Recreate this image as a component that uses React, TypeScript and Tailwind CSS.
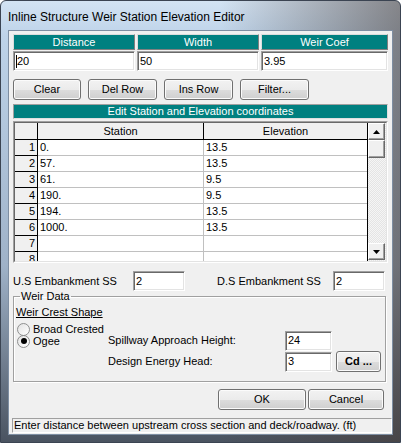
import React from "react";

const rows: [string, string][] = [
  ["0.", "13.5"],
  ["57.", "13.5"],
  ["61.", "9.5"],
  ["190.", "9.5"],
  ["194.", "13.5"],
  ["1000.", "13.5"],
  ["", ""],
  ["", ""],
];

const sunken =
  "border border-t-[#a0a0a0] border-l-[#a0a0a0] border-b-white border-r-white shadow-[inset_1px_1px_0_#696969,inset_-1px_-1px_0_#e3e3e3] bg-white";

const btn =
  "flex items-center justify-center rounded-[3px] border border-[#707070] bg-[linear-gradient(to_bottom,#f2f2f2,#ebebeb_50%,#dddddd_51%,#cfcfcf)] shadow-[inset_0_0_0_1px_#fbfbfb] text-[11px] text-black";

function Field({ value, className, caret }: { value: string; className: string; caret?: boolean }) {
  return (
    <div className={`${sunken} ${className} flex items-center pl-[2px] text-[11px]`}>
      {caret && <span className="w-px h-[13px] bg-black" />}
      <span>{value}</span>
    </div>
  );
}

function Radio({ checked, label }: { checked?: boolean; label: string }) {
  return (
    <div className="flex items-center h-[12px]">
      <span className="w-[13px] h-[13px] rounded-full border border-[#8e8f8f] bg-[linear-gradient(135deg,#e2e2e2,#ffffff)] flex items-center justify-center">
        {checked && <span className="w-[6px] h-[6px] rounded-full bg-black" />}
      </span>
      <span className="ml-[3px]">{label}</span>
    </div>
  );
}

function ScrollBtn({ up }: { up?: boolean }) {
  return (
    <div className="h-[17px] w-[17px] bg-[#f0f0f0] border border-t-white border-l-white border-b-[#696969] border-r-[#696969] shadow-[inset_-1px_-1px_0_#a0a0a0] flex items-center justify-center">
      <svg width="7" height="4" viewBox="0 0 7 4">
        {up ? <path d="M3.5 0L7 4H0z" fill="#000" /> : <path d="M0 0H7L3.5 4z" fill="#000" />}
      </svg>
    </div>
  );
}

export default function App() {
  return (
    <div className="w-[401px] h-[443px] bg-white font-['Liberation_Sans',Arial,sans-serif] text-black">
      <div className="w-full h-full flex flex-col rounded-t-[6px] border border-[#3b4452] bg-[linear-gradient(to_right,transparent_55%,rgba(70,58,52,0.55)),linear-gradient(to_bottom,#d3e3f3,#bed3e9_8%,#9fb2c8_60%,#4a5360)]">
        {/* title */}
        <div className="h-[29px] flex items-center pl-[7px] pt-[2px] text-[12px] text-black">
          Inline Structure Weir Station Elevation Editor
        </div>
        {/* client */}
        <div className="mx-[7px] h-[405px] bg-[#f0f0f0] border border-[#7e8ea2] flex flex-col pl-[4px] pt-[3px] text-[11px]">
          {/* top table */}
          <div className="grid grid-cols-[122px_122px_127px] gap-x-[2px] gap-y-[1px] w-[375px]">
            {["Distance", "Width", "Weir Coef"].map((h) => (
              <div
                key={h}
                className="h-[16px] bg-[#008080] text-white text-[11px] flex items-center justify-center border border-t-[#dcdcdc] border-l-[#dcdcdc] border-b-[#808080] border-r-[#808080]"
              >
                {h}
              </div>
            ))}
            <Field value="20" className="h-[20px]" caret />
            <Field value="50" className="h-[20px]" />
            <Field value="3.95" className="h-[20px]" />
          </div>

          {/* buttons */}
          <div className="flex gap-[7px] mt-[8px]">
            <div className={`${btn} w-[68px] h-[21px]`}>Clear</div>
            <div className={`${btn} w-[69px] h-[21px]`}>Del Row</div>
            <div className={`${btn} w-[69px] h-[21px]`}>Ins Row</div>
            <div className={`${btn} w-[69px] h-[21px]`}>Filter...</div>
          </div>

          {/* teal bar */}
          <div className="mt-[4px] w-[375px] h-[15px] bg-[#008080] text-white flex items-center justify-center border border-t-[#a0a0a0] border-l-[#a0a0a0] border-b-[#e0e0e0] border-r-[#e0e0e0]">
            Edit Station and Elevation coordinates
          </div>

          {/* grid */}
          <div className="mt-[2px] w-[375px] h-[142px] border border-t-[#a0a0a0] border-l-[#a0a0a0] border-b-white border-r-white">
            <div className="w-full h-full border border-t-[#696969] border-l-[#696969] border-b-[#e3e3e3] border-r-[#e3e3e3] flex bg-white overflow-hidden">
              <div className="w-[353px] flex flex-col border-r border-black">
                <div className="flex h-[17px] shrink-0 border-b border-black bg-[#f0f0f0]">
                  <div className="w-[23px] border-r border-black" />
                  <div className="w-[166px] border-r border-black flex items-center justify-center">Station</div>
                  <div className="flex-1 flex items-center justify-center">Elevation</div>
                </div>
                {rows.map((r, i) => (
                  <div key={i} className="flex h-[16px] shrink-0">
                    <div className="w-[23px] border-r border-b border-black bg-[#f0f0f0] flex items-center justify-end pr-[2px]">
                      {i + 1}
                    </div>
                    <div className="w-[166px] border-r border-b border-[#c0c0c0] flex items-center pl-[2px]">{r[0]}</div>
                    <div className="flex-1 border-b border-[#c0c0c0] flex items-center pl-[2px]">{r[1]}</div>
                  </div>
                ))}
              </div>
              <div className="w-[18px] flex flex-col bg-[repeating-conic-gradient(#f5f5f5_0_25%,#e4e4e4_0_50%)] bg-[length:2px_2px]">
                <ScrollBtn up />
                <div className="h-[18px] w-[17px] bg-[#f0f0f0] border border-t-white border-l-white border-b-[#696969] border-r-[#696969] shadow-[inset_-1px_-1px_0_#a0a0a0]" />
                <div className="flex-1" />
                <div className="mb-[1px]">
                  <ScrollBtn />
                </div>
              </div>
            </div>
          </div>

          {/* embankment */}
          <div className="mt-[8px] flex items-center h-[20px]">
            <span className="w-[120px]">U.S Embankment SS</span>
            <Field value="2" className="w-[52px] h-[20px]" />
            <span className="ml-[32px] w-[116px]">D.S Embankment SS</span>
            <Field value="2" className="w-[52px] h-[20px]" />
          </div>

          {/* weir data */}
          <fieldset className="mt-[-1px] w-[373px] border border-[#a0a0a0] shadow-[inset_1px_1px_0_#ffffff,1px_1px_0_#ffffff] pl-[2px] pb-[9px]">
            <legend className="ml-[4px] px-[1px] leading-[13px]">Weir Data</legend>
            <div className="underline leading-[13px] mt-[3px]">Weir Crest Shape</div>
            <div className="flex mt-[4px]">
              <div className="w-[92px] flex flex-col pl-[1px]">
                <Radio label="Broad Crested" />
                <Radio label="Ogee" checked />
              </div>
              <div className="flex flex-col mt-[7px]">
                <div className="flex items-center h-[21px]">
                  <span className="w-[177px]">Spillway Approach Height:</span>
                  <Field value="24" className="w-[47px] h-[20px]" />
                </div>
                <div className="flex items-center h-[21px]">
                  <span className="w-[177px]">Design Energy Head:</span>
                  <Field value="3" className="w-[47px] h-[20px]" />
                  <div className={`${btn} ml-[4px] w-[45px] h-[21px] font-bold`}>Cd ...</div>
                </div>
              </div>
            </div>
          </fieldset>

          {/* ok cancel */}
          <div className="mt-[7px] flex justify-end gap-[2px] pr-[8px]">
            <div className={`${btn} w-[88px] h-[21px]`}>OK</div>
            <div className={`${btn} w-[76px] h-[21px]`}>Cancel</div>
          </div>

          {/* status */}
          <div className="mt-[8px] ml-[-1px] w-[380px] h-[15px] border border-t-[#a0a0a0] border-l-[#a0a0a0] border-b-white border-r-white flex items-center pl-[1px]">
            Enter distance between upstream cross section and deck/roadway. (ft)
          </div>
        </div>
      </div>
    </div>
  );
}
